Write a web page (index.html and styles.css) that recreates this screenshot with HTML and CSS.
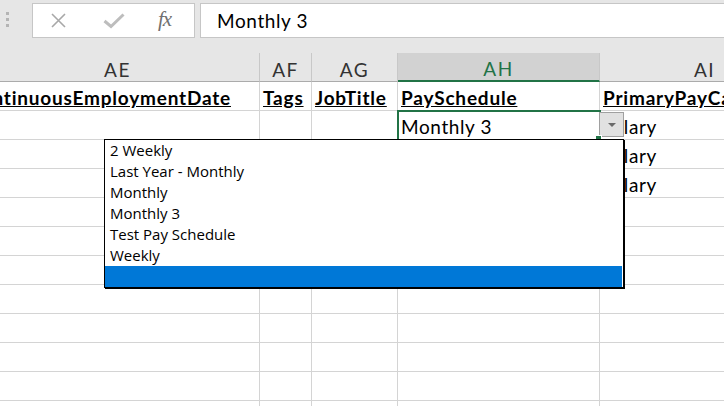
FILE: index.html
```html
<!DOCTYPE html>
<html lang="en">
<head>
<meta charset="utf-8">
<title>Pay schedules</title>
<link rel="stylesheet" href="styles.css">
</head>
<body>
<div class="app">
  <div class="formula-bar">
    <div class="grip"><span></span><span></span><span></span></div>
    <div class="fx-tools">
      <svg class="icon-cancel" width="17" height="17" viewBox="0 0 17 17">
        <path d="M2 2 L15 15 M15 2 L2 15" stroke="#a8a8a8" stroke-width="1.6" fill="none"/>
      </svg>
      <svg class="icon-enter" width="22" height="16" viewBox="0 0 22 16">
        <path d="M1.5 8 L8 13.5 L20.5 1.5" stroke="#bdbdbd" stroke-width="3" fill="none" stroke-linejoin="miter"/>
      </svg>
      <span class="fx">fx</span>
    </div>
    <div class="formula-input">Monthly 3</div>
  </div>

  <div class="sheet">
    <div class="col-head">AE</div>
    <div class="col-head">AF</div>
    <div class="col-head">AG</div>
    <div class="col-head selected">AH</div>
    <div class="col-head">AI</div>

    <div class="cell title wide-text">ContinuousEmploymentDate</div>
    <div class="cell title">Tags</div>
    <div class="cell title">JobTitle</div>
    <div class="cell title">PaySchedule</div>
    <div class="cell title">PrimaryPayCategory</div>

    <div class="cell"></div>
    <div class="cell"></div>
    <div class="cell"></div>
    <div class="cell active">Monthly 3
      <span class="drop-button"><i></i></span>
      <ul class="drop-list">
        <li>2 Weekly</li>
        <li>Last Year - Monthly</li>
        <li>Monthly</li>
        <li>Monthly 3</li>
        <li>Test Pay Schedule</li>
        <li>Weekly</li>
        <li class="highlight"></li>
      </ul>
    </div>
    <div class="cell">Salary</div>

    <div class="cell"></div><div class="cell"></div><div class="cell"></div><div class="cell"></div><div class="cell">Salary</div>
    <div class="cell"></div><div class="cell"></div><div class="cell"></div><div class="cell"></div><div class="cell">Salary</div>
    <div class="cell"></div><div class="cell"></div><div class="cell"></div><div class="cell"></div><div class="cell"></div>
    <div class="cell"></div><div class="cell"></div><div class="cell"></div><div class="cell"></div><div class="cell"></div>
    <div class="cell"></div><div class="cell"></div><div class="cell"></div><div class="cell"></div><div class="cell"></div>
    <div class="cell"></div><div class="cell"></div><div class="cell"></div><div class="cell"></div><div class="cell"></div>
    <div class="cell"></div><div class="cell"></div><div class="cell"></div><div class="cell"></div><div class="cell"></div>
    <div class="cell"></div><div class="cell"></div><div class="cell"></div><div class="cell"></div><div class="cell"></div>
    <div class="cell"></div><div class="cell"></div><div class="cell"></div><div class="cell"></div><div class="cell"></div>
    <div class="cell"></div><div class="cell"></div><div class="cell"></div><div class="cell"></div><div class="cell"></div>
  </div>
</div>
</body>
</html>
```

FILE: styles.css
```css
html, body {
  margin: 0;
  height: 100%;
  overflow: hidden;
  background: #fff;
}

body {
  font-family: Lato, "Liberation Sans", sans-serif;
  color: #000;
}

.app {
  width: 724px;
  height: 406px;
  overflow: hidden;
}

/* ---------- formula bar ---------- */
.formula-bar {
  height: 53px;
  box-sizing: border-box;
  padding-top: 3px;
  background: #e6e6e6;
  display: flex;
  align-items: flex-start;
}

.grip {
  width: 32px;
  box-sizing: border-box;
  padding: 9px 0 0 6px;
  display: flex;
  flex-direction: column;
  gap: 3px;
}

.grip span {
  width: 3px;
  height: 3px;
  background: #b4b4b4;
}

.fx-tools {
  width: 163px;
  height: 35px;
  box-sizing: border-box;
  border: 1px solid #c6c6c6;
  background: #fff;
  display: flex;
  align-items: center;
  padding-left: 17px;
}

.icon-enter {
  margin-left: 36px;
}

.fx {
  margin-left: 33px;
  font-family: "Liberation Serif", serif;
  font-style: italic;
  font-size: 21px;
  color: #707070;
  letter-spacing: -1px;
  margin-top: -2px;
}

.formula-input {
  flex: 1;
  margin-left: 5px;
  height: 35px;
  box-sizing: border-box;
  border: 1px solid #c6c6c6;
  border-right: none;
  background: #fff;
  display: flex;
  align-items: center;
  padding-left: 16px;
  font-size: 19px;
  letter-spacing: 0.6px;
}

/* ---------- worksheet grid ---------- */
.sheet {
  margin-left: -24px;
  display: grid;
  grid-template-columns: 284px 52px 86px 202px 210px;
  grid-auto-rows: 29px;
}

.col-head,
.cell {
  box-sizing: border-box;
  display: flex;
  align-items: flex-end;
  white-space: nowrap;
  overflow: hidden;
  font-size: 19px;
  letter-spacing: 0.6px;
}

.col-head {
  justify-content: center;
  background: #e6e6e6;
  color: #333;
  border-right: 1px solid #c8c8c8;
  border-bottom: 1px solid #ababab;
  letter-spacing: 1.5px;
}

.col-head.selected {
  background: #d2d2d2;
  color: #217346;
  border-bottom: 2px solid #217346;
}

.cell {
  padding: 0 3px 1px;
  border-right: 1px solid #d4d4d4;
  border-bottom: 1px solid #d4d4d4;
}

.cell.title {
  font-weight: 700;
  text-decoration: underline;
  letter-spacing: 0.8px;
}

/* long heading in the column scrolled off to the left */
.cell.wide-text {
  justify-content: flex-end;
  padding-right: 28px;
}

/* selected cell with its validation list open */
.cell.active {
  position: relative;
  overflow: visible;
  outline: 2px solid #217346;
  outline-offset: -1px;
  z-index: 2;
}

.cell.active::after {
  content: "";
  position: absolute;
  right: -3px;
  bottom: -3px;
  width: 5px;
  height: 5px;
  background: #217346;
  border: 1px solid #fff;
}

.drop-button {
  position: absolute;
  left: 201px;
  top: 1px;
  width: 25px;
  height: 25px;
  box-sizing: border-box;
  border: 1px solid #a0a0a0;
  background: #e1e1e1;
  display: flex;
  align-items: center;
  justify-content: center;
}

.drop-button i {
  width: 0;
  height: 0;
  border-left: 4px solid transparent;
  border-right: 4px solid transparent;
  border-top: 4px solid #6a6a6a;
}

.drop-list {
  position: absolute;
  left: -294px;
  top: 28px;
  width: 520px;
  margin: 0;
  padding: 0;
  list-style: none;
  box-sizing: border-box;
  border: 1px solid #000;
  box-shadow: 1px 1px 0 #000;
  background: #fff;
  z-index: 3;
}

.drop-list li {
  height: 21px;
  line-height: 21px;
  padding-left: 5px;
  font-family: "Open Sans", "Noto Sans", sans-serif;
  font-size: 15px;
  letter-spacing: 0;
  color: #000;
  font-weight: 400;
  text-decoration: none;
}

.drop-list li.highlight {
  background: #0078d7;
  margin-right: 1px;
}
```
